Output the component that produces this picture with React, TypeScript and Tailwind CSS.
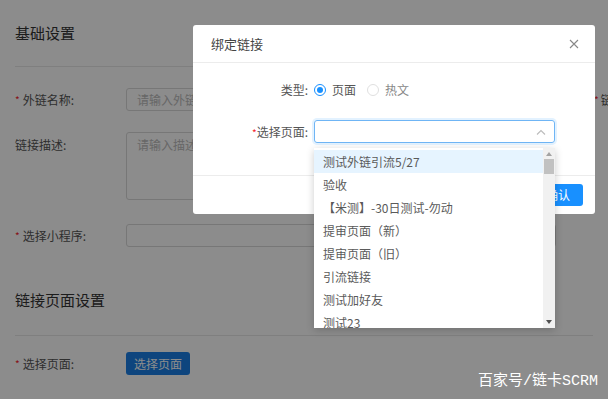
import React from "react";

const font = { fontFamily: '"Noto Sans CJK SC", "Noto Sans", sans-serif' };

function Label({ text, required }: { text: string; required?: boolean }) {
  return (
    <div className="w-[111px] shrink-0 flex items-center text-[12px] text-[#555]">
      {required ? <span className="text-[#f5222d] mr-[3px] text-[10px]">*</span> : null}
      <span>{text}</span>
    </div>
  );
}

function Background() {
  return (
    <div className="w-[608px] h-[399px] bg-white px-[15px] overflow-hidden" style={font}>
      <div className="h-[67px] flex items-center text-[15px] text-[#333] border-b border-[#e8e8e8]">基础设置</div>
      <div className="mt-[21px] h-[23px] flex items-center whitespace-nowrap">
        <Label text="外链名称:" required />
        <div className="w-[430px] shrink-0 h-[23px] border border-[#d9d9d9] rounded-[3px] px-[10px] flex items-center text-[12px] text-[#bbb]">请输入外链名称</div>
        <div className="ml-[38px] shrink-0 text-[12px] text-[#555] flex items-center"><span className="text-[#f5222d] text-[10px] mr-[2px]">*</span>链接地址:</div>
      </div>
      <div className="mt-[21px] flex">
        <div className="w-[111px] shrink-0 pt-[4px] text-[12px] text-[#555]">链接描述:</div>
        <div className="w-[430px] shrink-0 h-[68px] border border-[#d9d9d9] rounded-[3px] px-[10px] pt-[3px] text-[12px] text-[#bbb]">请输入描述</div>
      </div>
      <div className="mt-[24px] h-[23px] flex items-center">
        <Label text="选择小程序:" required />
        <div className="w-[430px] shrink-0 h-[23px] border border-[#d9d9d9] rounded-[3px]" />
      </div>
      <div className="mt-[19px] h-[70px] flex items-center text-[15px] text-[#333] border-b border-[#e8e8e8]">链接页面设置</div>
      <div className="mt-[16px] h-[23px] flex items-center">
        <Label text="选择页面:" required />
        <div className="w-[64px] h-[23px] rounded-[3px] bg-[#1a7fe6] text-white text-[12px] flex items-center justify-center">选择页面</div>
      </div>
    </div>
  );
}

function Radio({ checked, label }: { checked?: boolean; label: string }) {
  return (
    <div className="flex items-center mr-[11px]">
      <div
        className={
          checked
            ? "w-[12px] h-[12px] rounded-full border border-[#1890ff] flex items-center justify-center"
            : "w-[12px] h-[12px] rounded-full border border-[#e0e0e0]"
        }
      >
        {checked ? <div className="w-[6px] h-[6px] rounded-full bg-[#1890ff]" /> : null}
      </div>
      <span className={checked ? "ml-[6px] text-[12px] text-[#555]" : "ml-[6px] text-[12px] text-[#888]"}>{label}</span>
    </div>
  );
}

const items = [
  "测试外链引流5/27",
  "验收",
  "【米测】-30日测试-勿动",
  "提审页面（新）",
  "提审页面（旧）",
  "引流链接",
  "测试加好友",
  "测试23",
];

export default function App() {
  return (
    <div className="relative w-[608px] h-[399px] overflow-hidden" style={font}>
      <Background />
      <div className="absolute inset-0 bg-black/[0.45]" />
      {/* Modal */}
      <div className="absolute left-[193px] top-[25px] w-[402px] h-[189px] bg-white rounded-[3px] flex flex-col">
        <div className="h-[38px] flex items-center justify-between px-[18px] border-b border-[#ececec]">
          <span className="text-[13px] text-[#444]">绑定链接</span>
          <svg width="10" height="10" viewBox="0 0 10 10" className="mr-[-2px]">
            <path d="M1 1L9 9M9 1L1 9" stroke="#888" strokeWidth="1.1" />
          </svg>
        </div>
        <div className="h-[113px] border-b border-[#ececec]">
          <div className="mt-[18px] h-[18px] flex items-center">
            <div className="w-[115px] text-right text-[12px] text-[#555]">类型:</div>
            <div className="ml-[6px] flex items-center">
              <Radio checked label="页面" />
              <Radio label="热文" />
            </div>
          </div>
          <div className="mt-[21px] h-[23px] flex items-center">
            <div className="w-[115px] text-right text-[12px] text-[#555]">
              <span className="text-[#f5222d] text-[10px]">*</span>选择页面:
            </div>
            <div className="ml-[6px] w-[241px] h-[23px] border border-[#6fb5f5] rounded-[3px] shadow-[0_0_0_2px_rgba(24,144,255,0.12)] flex items-center justify-end pr-[8px]">
              <svg width="10" height="6" viewBox="0 0 10 6">
                <path d="M1 5.5L5 1.5L9 5.5" stroke="#bbb" strokeWidth="1.1" fill="none" />
              </svg>
            </div>
          </div>
        </div>
        <div className="flex-1 flex items-center justify-end pr-[12px]">
          <div className="w-[50px] h-[22px] rounded-[3px] bg-[#1890ff] text-white text-[12px] flex items-center justify-center">确认</div>
        </div>
      </div>
      {/* Dropdown */}
      <div className="absolute left-[314px] top-[148px] w-[241px] h-[180px] bg-white shadow-[0_2px_8px_rgba(0,0,0,0.2)] flex overflow-hidden">
        <div className="flex-1 pt-[2px]">
          {items.map((t, i) => (
            <div
              key={t}
              className={
                i === 0
                  ? "h-[23px] flex items-center px-[9px] text-[12px] text-[#5a5a5a] bg-[#e6f4ff] whitespace-nowrap"
                  : "h-[23px] flex items-center px-[9px] text-[12px] text-[#5a5a5a] whitespace-nowrap"
              }
            >
              {t}
            </div>
          ))}
        </div>
        <div className="w-[12px] bg-[#f1f1f1] flex flex-col items-center">
          <svg width="6" height="4" viewBox="0 0 6 4" className="mt-[4px]">
            <path d="M0 4L3 0L6 4Z" fill="#a3a3a3" />
          </svg>
          <div className="mt-[3px] w-[10px] h-[15px] bg-[#c1c1c1]" />
          <div className="flex-1" />
          <svg width="6" height="4" viewBox="0 0 6 4" className="mb-[4px]">
            <path d="M0 0L6 0L3 4Z" fill="#505050" />
          </svg>
        </div>
      </div>
      {/* Watermark */}
      <div
        className="absolute right-[10px] top-[371px] text-[15px] text-white whitespace-nowrap"
        style={{ fontFamily: '"Liberation Mono", "Noto Sans CJK SC", monospace' }}
      >
        百家号/链卡SCRM
      </div>
    </div>
  );
}
